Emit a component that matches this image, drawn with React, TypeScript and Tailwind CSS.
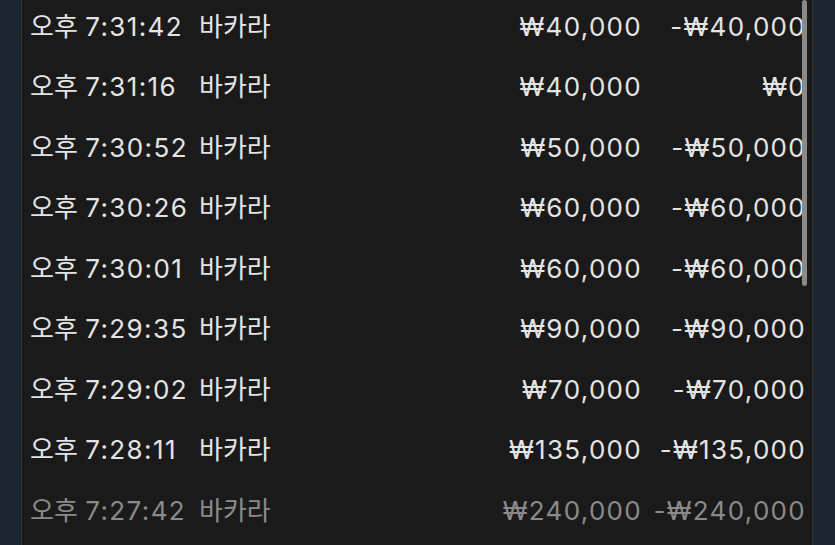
import React from 'react';

type Row = { time: string; game: string; bet: string; net: string };

const rows: Row[] = [
    { time: '7:31:42', game: '바카라', bet: '₩40,000', net: '-₩40,000' },
    { time: '7:31:16', game: '바카라', bet: '₩40,000', net: '₩0' },
    { time: '7:30:52', game: '바카라', bet: '₩50,000', net: '-₩50,000' },
    { time: '7:30:26', game: '바카라', bet: '₩60,000', net: '-₩60,000' },
    { time: '7:30:01', game: '바카라', bet: '₩60,000', net: '-₩60,000' },
    { time: '7:29:35', game: '바카라', bet: '₩90,000', net: '-₩90,000' },
    { time: '7:29:02', game: '바카라', bet: '₩70,000', net: '-₩70,000' },
    { time: '7:28:11', game: '바카라', bet: '₩135,000', net: '-₩135,000' },
    { time: '7:27:42', game: '바카라', bet: '₩240,000', net: '-₩240,000' },
];

export default function App() {
    return (
        <div
            className="w-[835px] h-[545px] overflow-hidden bg-[#1c2630] flex"
            style={{ fontFamily: 'Inter, "Noto Sans CJK KR", sans-serif' }}
        >
            <div className="ml-[21px] w-[792px] h-full relative overflow-hidden bg-[#1a1a1a] border-l border-r border-[#2f3235]">
                <div className="-mt-[4px]">
                    {rows.map((r, i) => (
                        <div
                            key={i}
                            className={`h-[60.5px] flex items-center text-[26px] ${i === rows.length - 1 ? 'text-[#8a8a8a]' : 'text-[#e4e4e4]'}`}
                        >
                            <span className="pl-[8px] w-[177px] whitespace-nowrap">
                                오후 <span className="tracking-[1.4px]">{r.time}</span>
                            </span>
                            <span className="w-[150px]">{r.game}</span>
                            <span className="w-[293px] text-right tracking-[1.3px]">{r.bet}</span>
                            <span className="w-[164px] text-right whitespace-nowrap tracking-[1.3px]">{r.net}</span>
                        </div>
                    ))}
                </div>
                <div className="absolute right-[5px] top-0 w-[5px] h-[286px] rounded-full bg-[#8a8a8a]" />
            </div>
        </div>
    );
}
